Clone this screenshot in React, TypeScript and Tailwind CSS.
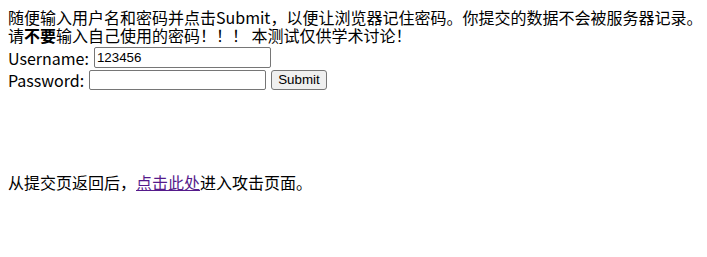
const font = { fontFamily: '"Noto Sans CJK SC", "Noto Sans", sans-serif' };

export default function App() {
  return (
    <div
      className="m-2 text-[16px] leading-[18px] text-black"
      style={font}
    >
      <div className="whitespace-nowrap">随便输入用户名和密码并点击Submit，以便让浏览器记住密码。你提交的数据不会被服务器记录。</div>
      <div className="whitespace-nowrap">
        请<b className="font-bold">不要</b>输入自己使用的密码！！！ 本测试仅供学术讨论！
      </div>
      <form className="flex flex-col" onSubmit={(e) => e.preventDefault()}>
        <div className="mt-[3px] flex h-[21px] items-center">
          <span>Username:</span>
          <input
            defaultValue="123456"
            className="ml-[5px] h-[21px] w-[177px] rounded-[2px] border border-[#767676] px-[2px] text-[13.33px] leading-none text-black outline-none"
            style={{ fontFamily: '"Liberation Sans", Arial, sans-serif' }}
          />
        </div>
        <div className="mt-[2px] flex h-[20px] items-center">
          <span>Password:</span>
          <input
            type="password"
            className="ml-[5px] h-[20px] w-[177px] rounded-[2px] border border-[#767676] px-[2px] text-[13.33px] outline-none"
          />
          <button
            type="submit"
            className="ml-[5px] h-[20px] rounded-[3px] border border-[#767676] bg-[#efefef] px-[6px] text-[13.33px] leading-none text-black"
            style={{ fontFamily: '"Liberation Sans", Arial, sans-serif' }}
          >
            Submit
          </button>
        </div>
      </form>
      <div className="mt-[83px]">
        从提交页返回后，
        <a href="#" className="text-[#551a8b] underline">
          点击此处
        </a>
        进入攻击页面。
      </div>
    </div>
  );
}
